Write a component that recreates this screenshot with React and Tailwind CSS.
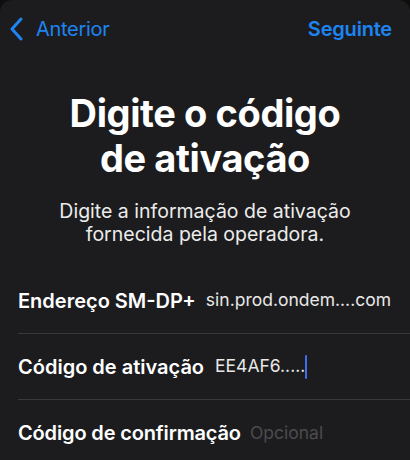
export default function App() {
  return (
    <div className="w-[410px] h-[460px] bg-[#0e0e0f] overflow-hidden" style={{ fontFamily: 'Inter, "Noto Sans", sans-serif' }}>
      <div className="h-[460px] bg-[#1c1c1e] rounded-t-[12px] overflow-hidden">
        <div className="h-[58px] flex items-center justify-between pl-[10px] pr-[18px]">
          <div className="flex items-center gap-[13px] text-[#1d84f2]">
            <svg width="13" height="24" viewBox="0 0 13 24" fill="none">
              <path d="M11 2 L2 12 L11 22" stroke="#1d84f2" strokeWidth="3" strokeLinecap="round" strokeLinejoin="round" />
            </svg>
            <span className="text-[20px] tracking-[-0.3px]">Anterior</span>
          </div>
          <span className="text-[#1d84f2] text-[20px] font-semibold tracking-[-0.2px]">Seguinte</span>
        </div>
        <h1 className="mt-[33px] text-center text-white text-[38px] leading-[45px] font-bold tracking-[-0.4px]">
          Digite o código<br />de ativação
        </h1>
        <p className="mt-[19px] text-center text-[#ececec] text-[19.5px] leading-[23px]">
          Digite a informação de ativação<br />fornecida pela operadora.
        </p>
        <div className="mt-[22px] pl-[18px]">
          <div className="h-[66px] flex items-center border-b border-[#38383a]">
            <span className="text-white font-semibold text-[20px]">Endereço SM-DP+</span>
            <span className="ml-[10px] text-[#e8e8e8] text-[17.5px]">sin.prod.ondem....com</span>
          </div>
          <div className="h-[66px] flex items-center border-b border-[#38383a]">
            <span className="text-white font-semibold text-[20px]">Código de ativação</span>
            <span className="ml-[11px] text-[#e8e8e8] text-[17.5px]">EE4AF6.....</span>
            <span className="w-[2px] h-[24px] bg-[#3d6ef0] rounded-full" />
          </div>
          <div className="h-[66px] flex items-center">
            <span className="text-white font-semibold text-[20px] tracking-[-0.15px]">Código de confirmação</span>
            <span className="ml-[9px] text-[#4b4b4e] text-[17.5px]">Opcional</span>
          </div>
        </div>
      </div>
    </div>
  );
}
